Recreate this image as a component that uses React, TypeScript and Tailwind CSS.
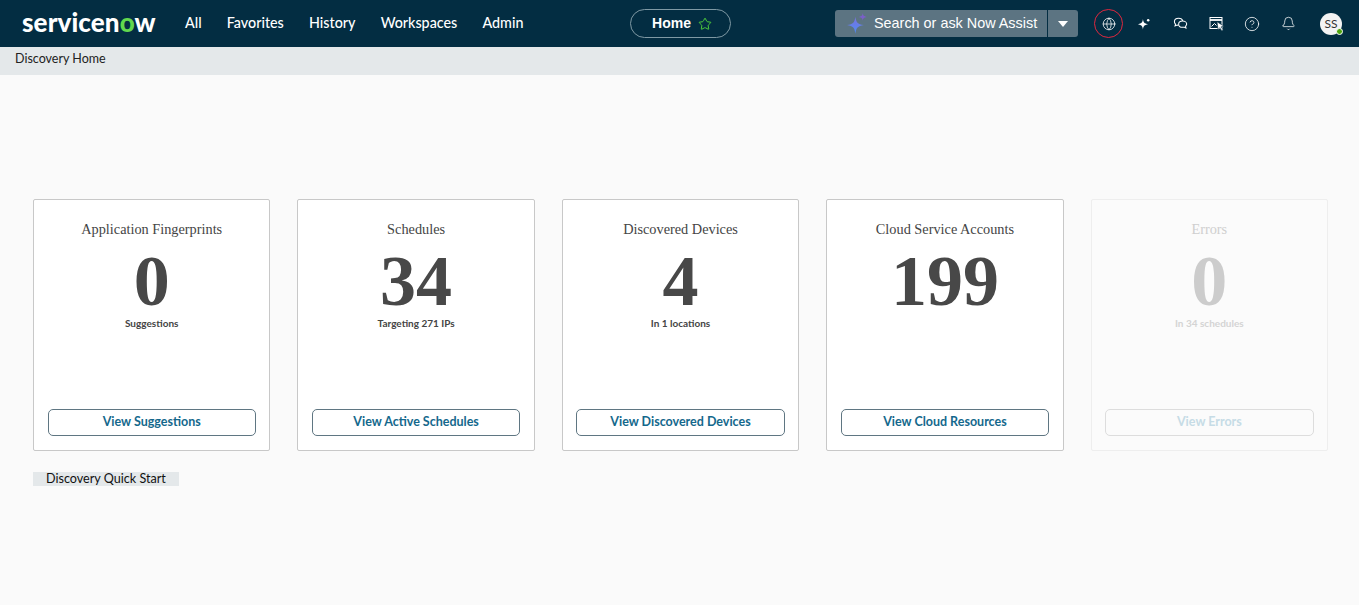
import React from "react";
import { Globe, Star, CircleHelp, Bell } from "lucide-react";

const lato = "font-['Lato','Noto_Sans',sans-serif]";
const serif = "font-['Liberation_Serif','Times_New_Roman',serif]";
const helv = "font-['Liberation_Sans',Arial,sans-serif]";

const cards = [
  { title: "Application Fingerprints", num: "0", sub: "Suggestions", btn: "View Suggestions" },
  { title: "Schedules", num: "34", sub: "Targeting 271 IPs", btn: "View Active Schedules" },
  { title: "Discovered Devices", num: "4", sub: "In 1 locations", btn: "View Discovered Devices" },
  { title: "Cloud Service Accounts", num: "199", sub: "", btn: "View Cloud Resources" },
  { title: "Errors", num: "0", sub: "In 34 schedules", btn: "View Errors", disabled: true },
];

function Sparkle({ className }: { className?: string }) {
  return (
    <svg viewBox="0 0 20 20" className={className}>
      <path d="M8.500 3 C9.200 8 10.500 9.400 16 10.500 C10.500 11.600 9.200 13 8.500 18 C7.800 13 6.500 11.600 1 10.500 C6.500 9.400 7.800 8 8.500 3Z" fill="#fff" />
      <circle cx="16" cy="4.500" r="1.800" fill="#fff" />
    </svg>
  );
}

function AssistSpark() {
  return (
    <svg viewBox="0 0 20 20" className="w-[21px] h-[21px]">
      <defs>
        <linearGradient id="g1" x1="0" y1="0" x2="0" y2="1">
          <stop offset="0" stopColor="#7a6fe0" />
          <stop offset="1" stopColor="#4f8df0" />
        </linearGradient>
      </defs>
      <path d="M8 3.500 C8.800 9 10 10.400 16 11.500 C10 12.600 8.800 14 8 19.800 C7.200 14 6 12.600 0 11.500 C6 10.400 7.200 9 8 3.500Z" fill="url(#g1)" />
      <path d="M15 0 C15.300 2.400 16 3.100 19 3.700 C16 4.300 15.300 5 15 7.400 C14.700 5 14 4.300 11 3.700 C14 3.100 14.700 2.400 15 0Z" fill="#7a5fc8" />
    </svg>
  );
}

function Chats() {
  return (
    <svg viewBox="0 0 16 16" className="w-[15px] h-[15px]" fill="none" stroke="#fff" strokeWidth="1.100">
      <path d="M5.800 9.800c-.5 0-1-.1-1.400-.2l-2.200 1 .5-2c-.7-.7-1.200-1.600-1.200-2.600 0-2.100 2-3.700 4.500-3.700 2.200 0 4 1.200 4.400 2.900" />
      <path d="M10.200 5.400c2.400 0 4.400 1.400 4.400 3.200 0 .9-.5 1.700-1.200 2.300l.4 2-2.100-1c-.5.100-.9.100-1.400.100-2.400 0-4.300-1.400-4.300-3.300s1.900-3.300 4.200-3.300z" />
    </svg>
  );
}

function Showcase() {
  return (
    <svg viewBox="0 0 16 16" className="w-[16px] h-[16px]" fill="none" stroke="#fff" strokeWidth="1">
      <rect x="1" y="1.500" width="12" height="11" />
      <path d="M1 4h12" strokeWidth="1.800" />
      <path d="M2.500 10.500l3-3 2 2" />
      <path d="M8 5.800l7 4.400-2.800.6 2 3.200-1.400.9-2-3.200-1.800 2z" fill="#fff" stroke="#032d42" strokeWidth="0.600" />
    </svg>
  );
}

function TopBar() {
  return (
    <header className="h-[47px] bg-[#032d42] flex items-center text-white shrink-0">
      <div className="w-[185px] pl-[22px] shrink-0">
        <span className={`${lato} font-black text-[26px] leading-none tracking-[0.1px] block -mt-[3px]`}>
          servicen<span className="text-[#62d84e]">o</span>w
        </span>
      </div>
      <nav className={`${lato} flex items-center gap-[25.200px] text-[14.300px] font-medium w-[445px] -mt-[1px] shrink-0`}>
        <span>All</span>
        <span>Favorites</span>
        <span>History</span>
        <span>Workspaces</span>
        <span>Admin</span>
      </nav>
      <div className={`${helv} w-[101px] h-[29px] pl-[3px] rounded-full border border-[#7f99a4] flex items-center justify-center gap-[7px] text-[14px] font-bold shrink-0`}>
        Home
        <Star className="w-[14px] h-[14px] text-[#52d53c]" strokeWidth={1.600} />
      </div>
      <div className="w-[104px] shrink-0" />
      <div className="flex h-[27px] w-[243px] shrink-0">
        <div className={`${helv} w-[212px] rounded-l-[3px] bg-[#5c7482] flex items-center gap-[6px] pl-[12px] text-[14.400px]`}>
          <AssistSpark />
          <span>Search or ask Now Assist</span>
        </div>
        <div className="w-[30px] ml-px rounded-r-[3px] bg-[#5c7482] flex items-center justify-center">
          <svg viewBox="0 0 10 6" className="w-[10px] h-[6px]"><path d="M0 0h10L5 6z" fill="#fff" /></svg>
        </div>
      </div>
      <div className="w-[16px] shrink-0" />
      <div className="w-[29px] h-[29px] rounded-full border border-[#e0283f] flex items-center justify-center shrink-0">
        <Globe className="w-[14px] h-[14px]" strokeWidth={1.300} />
      </div>
      <div className="flex items-center justify-center w-[43px] pr-[1px] shrink-0"><Sparkle className="w-[14px] h-[14px]" /></div>
      <div className="flex items-center justify-center w-[29px] shrink-0"><Chats /></div>
      <div className="flex items-center justify-center w-[43px] shrink-0"><Showcase /></div>
      <div className="flex items-center justify-center w-[29px] pr-[1px] shrink-0"><CircleHelp className="w-[16px] h-[16px]" strokeWidth={1.200} /></div>
      <div className="flex items-center justify-center w-[43px] shrink-0"><Bell className="w-[15px] h-[15px]" strokeWidth={1.200} /></div>
      <div className="relative w-[22px] h-[22px] ml-[10px] rounded-full bg-[#f4f4f4] text-[#333] flex items-center justify-center shrink-0">
        <span className={`${lato} text-[12px] leading-none`}>SS</span>
        <span className="absolute -right-[1px] bottom-0 w-[7px] h-[7px] rounded-full bg-[#4ea40e] border border-white" />
      </div>
    </header>
  );
}

function Card({ title, num, sub, btn, disabled }: { title: string; num: string; sub: string; btn: string; disabled?: boolean }) {
  return (
    <section className={`flex-1 min-w-0 h-[252px] rounded-[2px] border flex flex-col items-center pt-[20px] px-[13.500px] pb-[14px] ${disabled ? "border-[#eeeeee] bg-[#fbfbfb]" : "border-[#c8c8c8] bg-white"}`}>
      <h2 className={`${serif} text-[14.300px] leading-[18px] ${disabled ? "text-[#cfcfcf]" : "text-[#444]"}`}>{title}</h2>
      <div className={`${serif} font-bold text-[72px] leading-[60px] mt-[13px] ${disabled ? "text-[#cccccc]" : "text-[#484848]"}`}>{num}</div>
      <p className={`${lato} font-bold text-[10px] leading-[12px] mt-[6px] h-[12px] ${disabled ? "text-[#d4d4d4]" : "text-[#444]"}`}>{sub}</p>
      <button className={`${lato} mt-auto w-full h-[27px] pb-[1px] rounded-[5px] border bg-transparent font-bold text-[12.500px] ${disabled ? "border-[#dddddd] text-[#c6dce6]" : "border-[#5f7682] text-[#14688c]"}`}>
        {btn}
      </button>
    </section>
  );
}

export default function App() {
  return (
    <div className={`${lato} w-[1359px] h-[605px] overflow-hidden bg-[#fafafa] flex flex-col`}>
      <TopBar />
      <div className="h-[28px] bg-[#e4e8ea] pl-[15px] text-[12.500px] leading-[23px] text-[#222] shrink-0">Discovery Home</div>
      <main className="pl-[33px] pr-[31px] pt-[124px]">
        <div className="flex gap-[27px]">
          {cards.map((c) => <Card key={c.title} {...c} />)}
        </div>
        <div className="mt-[21px] w-[146px] h-[14px] bg-[#e4e8ea] pl-[13px] text-[12.600px] leading-[13px] text-[#111]">Discovery Quick Start</div>
      </main>
    </div>
  );
}
